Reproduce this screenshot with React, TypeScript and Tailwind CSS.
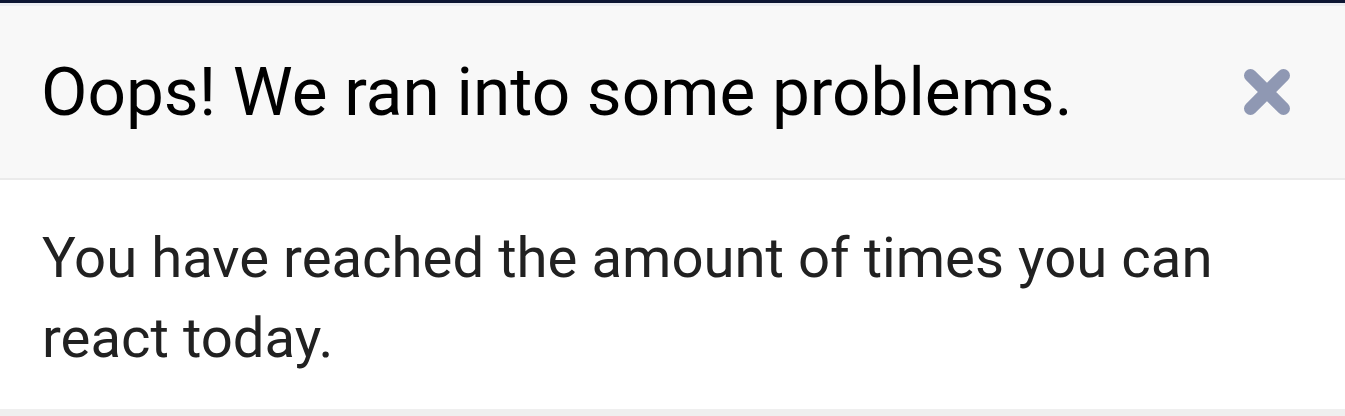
export default function App() {
  return (
    <div className="w-[1345px] h-[416px] overflow-hidden bg-white font-['Roboto',sans-serif]">
      {/* Backdrop peeking above the sheet */}
      <div className="h-[3px] bg-[#0d1633]" />
      <div className="h-[3px] bg-[#eceef2]" />

      {/* Header */}
      <div className="h-[174px] flex items-center justify-between pl-[41px] pr-[54px] bg-[#f8f8f8] border-b-2 border-[#ebebeb]">
        <h1 className="text-[67.5px] leading-none text-black">Oops! We ran into some problems.</h1>
        <button className="text-[#8f98b3]">
          <svg width="48" height="48" viewBox="0 0 48 48" fill="none" stroke="currentColor" strokeWidth="13" strokeLinecap="round">
            <path d="M7.5 7.5L40.5 40.5M40.5 7.5L7.5 40.5" />
          </svg>
        </button>
      </div>

      {/* Body */}
      <div className="h-[229px] pl-[42px] pr-[40px] pt-[38px]">
        <p className="text-[56.3px] leading-[80px] text-[#212121]">
          You have reached the amount of times you can react today.
        </p>
      </div>
      <div className="h-[7px] bg-[#efefef]" />
    </div>
  )
}
